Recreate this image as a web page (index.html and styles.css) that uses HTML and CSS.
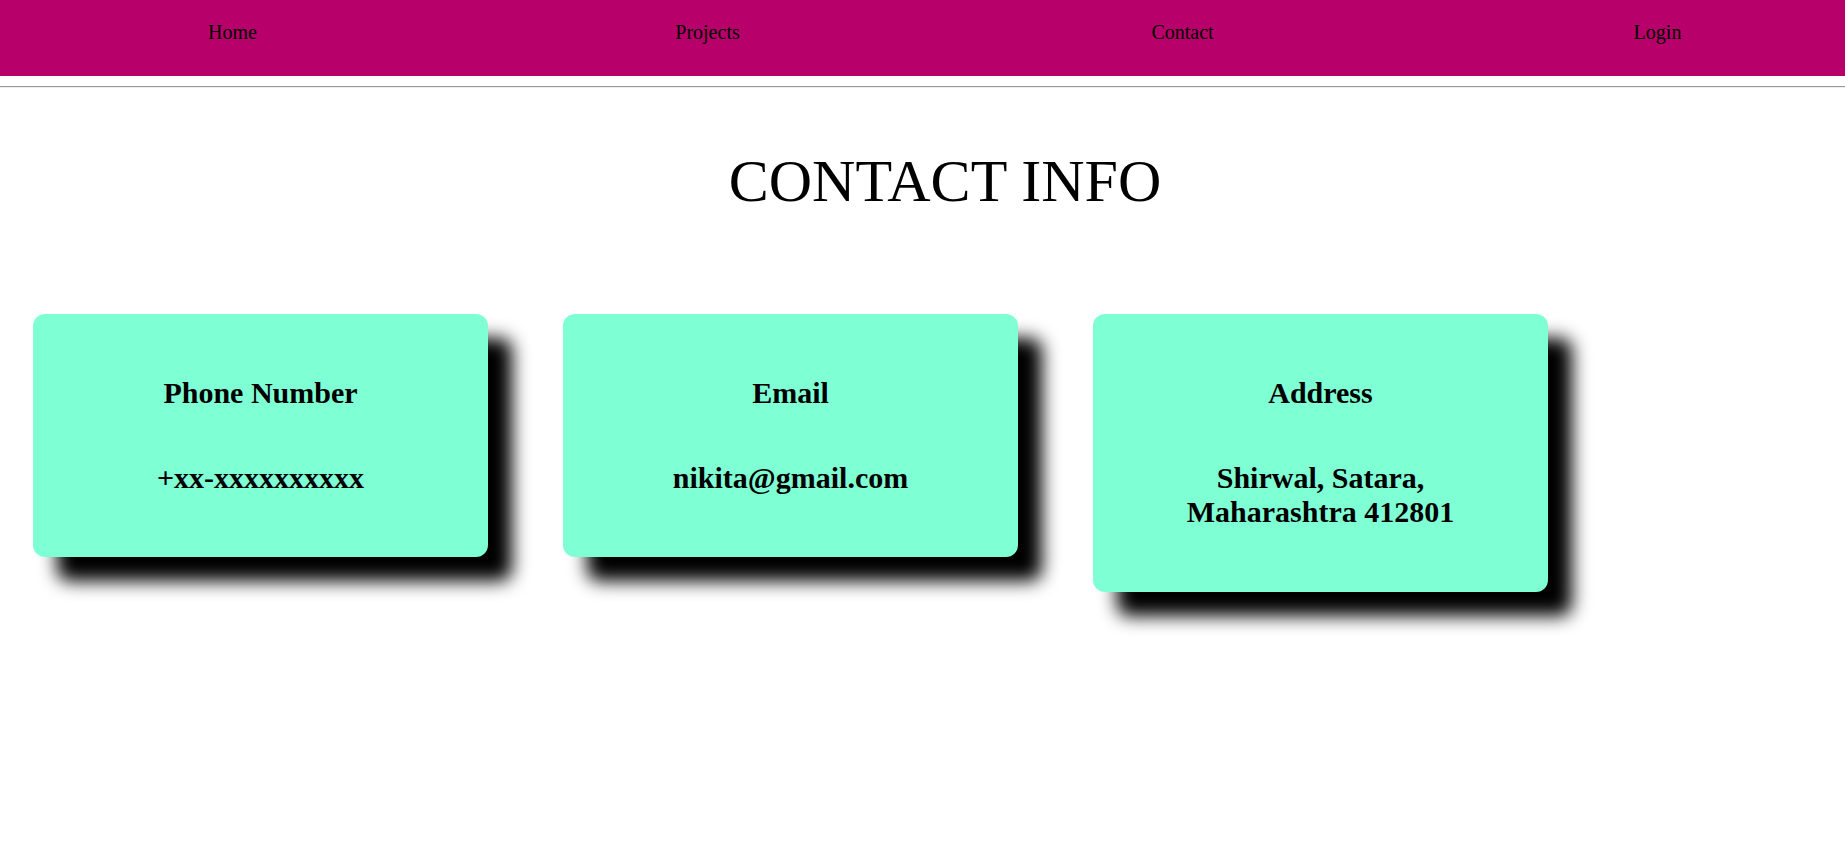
FILE: index.html
```html
<!DOCTYPE html>
<html lang="en">
<head>
<meta charset="utf-8">
<title>Contact Info</title>
<link rel="stylesheet" href="styles.css">
</head>
<body>
  <nav class="topnav">
    <ul class="nav-list">
      <li class="nav-item"><a class="nav-link" href="#">Home</a></li>
      <li class="nav-item"><a class="nav-link" href="#">Projects</a></li>
      <li class="nav-item"><a class="nav-link" href="#">Contact</a></li>
      <li class="nav-item"><a class="nav-link" href="#">Login</a></li>
    </ul>
  </nav>
  <hr class="divider">
  <main class="contact">
    <h1 class="contact-title">CONTACT INFO</h1>
    <div class="cards">
      <div class="card">
        <h2 class="card-title">Phone Number</h2>
        <h2 class="card-value">+xx-xxxxxxxxxx</h2>
      </div>
      <div class="card">
        <h2 class="card-title">Email</h2>
        <h2 class="card-value">nikita@gmail.com</h2>
      </div>
      <div class="card">
        <h2 class="card-title">Address</h2>
        <h2 class="card-value">Shirwal, Satara, Maharashtra 412801</h2>
      </div>
    </div>
  </main>
</body>
</html>
```
FILE: styles.css
```css
html, body {
  margin: 0;
  padding: 0;
  background: #ffffff;
}

body {
  font-family: "Liberation Serif", "Times New Roman", serif;
  color: #000;
}

.topnav {
  background: #b8006b;
  height: 76px;
  box-sizing: border-box;
  padding-top: 21px;
}

.nav-list {
  list-style: none;
  margin: 0;
  padding: 0 0 0 45px;
  display: flex;
  gap: 100px;
}

.nav-item {
  width: 375px;
  flex: 0 0 375px;
  text-align: center;
  font-size: 20px;
  line-height: 23px;
}

.nav-link {
  color: #000;
  text-decoration: none;
}

.divider {
  margin: 10px 0 0;
  border: 0;
  border-top: 1px solid #9a9a9a;
  border-bottom: 1px solid #eeeeee;
  height: 0;
}

.contact {
  padding-bottom: 60px;
}

.contact-title {
  margin: 59px 0 98px;
  padding-left: 45px;
  text-align: center;
  font-size: 60px;
  font-weight: normal;
  line-height: 69px;
}

.cards {
  display: flex;
  align-items: flex-start;
  gap: 75px;
  padding-left: 33px;
}

.card {
  width: 455px;
  flex: 0 0 455px;
  box-sizing: border-box;
  padding: 37px 45px;
  background: #7fffd4;
  border-radius: 12px;
  box-shadow: 24px 24px 18px #000;
  display: flex;
  flex-direction: column;
  text-align: center;
}

.card-title,
.card-value {
  margin: 25px 0;
  font-size: 30px;
  font-weight: bold;
  line-height: 34.5px;
}
```
